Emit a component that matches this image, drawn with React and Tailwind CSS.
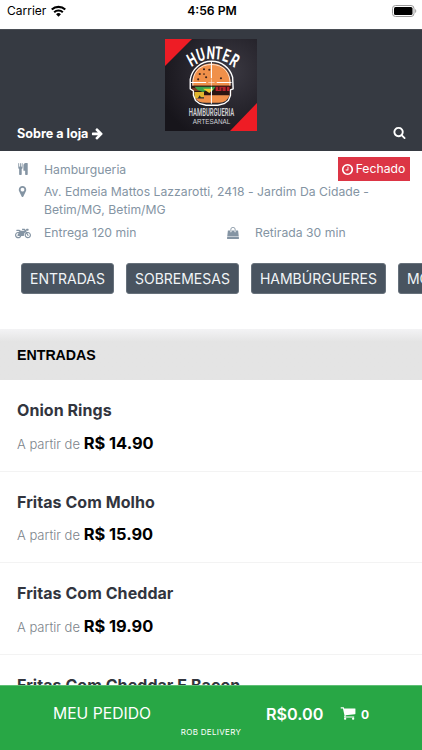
import React from 'react';
import { FaMotorcycle } from 'react-icons/fa';


const CATEGORIES = ['ENTRADAS', 'SOBREMESAS', 'HAMBÚRGUERES', 'MONTE'];

const PRODUCTS = [
  { id: 1, name: 'Onion Rings', price: '14.90' },
  { id: 2, name: 'Fritas Com Molho', price: '15.90' },
  { id: 3, name: 'Fritas Com Cheddar', price: '19.90' },
  { id: 4, name: 'Fritas Com Cheddar E Bacon' },
];

const ICONS = {
  cutlery: 'M832 64v640q0 61-35.5 111t-92.5 70v779q0 52-38 90t-90 38h-128q-52 0-90-38t-38-90v-779q-57-20-92.5-70t-35.5-111v-640q0-26 19-45t45-19 45 19 19 45v416q0 26 19 45t45 19 45-19 19-45v-416q0-26 19-45t45-19 45 19 19 45v416q0 26 19 45t45 19 45-19 19-45v-416q0-26 19-45t45-19 45 19 19 45zm768 0v1600q0 52-38 90t-90 38h-128q-52 0-90-38t-38-90v-512h-224q-13 0-22.5-9.5t-9.5-22.5v-800q0-132 94-226t226-94h256q26 0 45 19t19 45z',
  marker: 'M1152 640q0-106-75-181t-181-75-181 75-75 181 75 181 181 75 181-75 75-181zm256 0q0 109-33 179l-364 774q-16 33-47.5 52t-67.5 19-67.5-19-46.5-52l-365-774q-33-70-33-179 0-212 150-362t362-150 362 150 150 362z',
  bag: 'M1757 1408l35 313q3 28-16 50-19 21-48 21h-1664q-29 0-48-21-19-22-16-50l35-313h1722zm-93-839l86 775h-1708l86-775q3-24 21-40.5t43-16.5h256v128q0 53 37.5 90.5t90.5 37.5 90.5-37.5 37.5-90.5v-128h384v128q0 53 37.5 90.5t90.5 37.5 90.5-37.5 37.5-90.5v-128h256q25 0 43 16.5t21 40.5zm-384-185v256q0 26-19 45t-45 19-45-19-19-45v-256q0-106-75-181t-181-75-181 75-75 181v256q0 26-19 45t-45 19-45-19-19-45v-256q0-159 112.5-271.5t271.5-112.5 271.5 112.5 112.5 271.5z',
  search: 'M1216 832q0-185-131.5-316.5t-316.5-131.5-316.5 131.5-131.5 316.5 131.5 316.5 316.5 131.5 316.5-131.5 131.5-316.5zm512 832q0 52-38 90t-90 38q-54 0-90-38l-343-342q-179 124-399 124-143 0-273.5-55.5t-225-150-150-225-55.5-273.5 55.5-273.5 150-225 225-150 273.5-55.5 273.5 55.5 225 150 150 225 55.5 273.5q0 220-124 399l343 343q37 37 37 90z',
  clock: 'M1024 544v448q0 14-9 23t-23 9h-320q-14 0-23-9t-9-23v-64q0-14 9-23t23-9h224v-352q0-14 9-23t23-9h64q14 0 23 9t9 23zm416 352q0-148-73-273t-198-198-273-73-273 73-198 198-73 273 73 273 198 198 273 73 273-73 198-198 73-273zm224 0q0 209-103 385.5t-279.5 279.5-385.5 103-385.5-103-279.5-279.5-103-385.5 103-385.5 279.5-279.5 385.5-103 385.5 103 279.5 279.5 103 385.5z',
  cart: 'M704 1536q0 52-38 90t-90 38-90-38-38-90 38-90 90-38 90 38 38 90zm896 0q0 52-38 90t-90 38-90-38-38-90 38-90 90-38 90 38 38 90zm128-1088v512q0 24-16.5 42.5t-40.5 21.5l-1044 122q13 60 13 70 0 16-24 64h920q26 0 45 19t19 45-19 45-45 19h-1024q-26 0-45-19t-19-45q0-11 8-31.5t16-36 21.5-40 15.5-29.5l-177-823h-204q-26 0-45-19t-19-45 19-45 45-19h256q16 0 28.5 6.5t19.5 15.5 13 24.5 8 26 5.5 29.5 4.5 26h1201q26 0 45 19t19 45z',
  arrow: 'M1600 960q0 54-37 91l-651 651q-39 37-91 37-51 0-90-37l-75-75q-38-38-38-91t38-91l293-293h-704q-52 0-84.5-37.5t-32.5-90.5v-128q0-53 32.5-90.5t84.5-37.5h704l-293-294q-38-36-38-90t38-90l75-75q38-38 90-38 53 0 91 38l651 651q37 35 37 90z',
};


const Icon = ({ name, className }) => (
  <svg viewBox="0 0 1792 1792" fill="currentColor" className={className}>
    <path d={ICONS[name]} />
  </svg>
);


const StatusBar = () =>
{
  return (
    <div className="grid grid-cols-3 items-center h-[29px] shrink-0 pl-[7px] pr-[5px] pb-[7px] text-black">
      <div className="flex items-center gap-[5px]">
        <span className="text-[12px] leading-4">Carrier</span>
        <svg viewBox="0 0 16 12" className="w-[15px] h-[12px]" fill="none" stroke="currentColor">
          <path d="M.8 4.5a10.4 10.4 0 0 1 14.4 0" strokeWidth="2.3" />
          <path d="M3.4 7.3a6.6 6.6 0 0 1 9.2 0" strokeWidth="2.2" />
          <path d="M8 12 5.4 9.4a3.7 3.7 0 0 1 5.2 0z" fill="currentColor" stroke="none" />
        </svg>
      </div>
      <span className="text-center text-[12.2px] leading-4 font-semibold">4:56 PM</span>
      <svg viewBox="0 0 25 12" className="w-[25px] h-[12px] justify-self-end">
        <rect x="0.5" y="0.5" width="21.5" height="11" rx="3" fill="none" stroke="#9a9a9a" />
        <rect x="2" y="2" width="18.5" height="8" rx="1.5" fill="#000" />
        <path d="M23.2 4v4c1.4-.6 1.4-3.4 0-4z" fill="#9a9a9a" />
      </svg>
    </div>
  );
};


const StoreLogo = () =>
{
  return (
    <svg viewBox="0 0 92 92" className="w-[92px] h-[92px]">
      <defs>
        <radialGradient id="board" cx="0.7" cy="0.35" r="0.8">
          <stop offset="0" stopColor="#3b3942" />
          <stop offset="0.5" stopColor="#28262e" />
          <stop offset="1" stopColor="#17151b" />
        </radialGradient>
      </defs>
      <rect width="92" height="92" fill="url(#board)" />
      <path d="M0 0h27L0 27z" fill="#ee1c25" />
      <path d="M92 64v28H65z" fill="#ee1c25" />

      <g fill="#fff" fontFamily="Roboto, 'Liberation Sans', sans-serif" fontWeight="700" fontSize="18" textAnchor="middle">
        <text transform="translate(30 26) rotate(-28) scale(0.66 1)">H</text>
        <text transform="translate(37.5 21.5) rotate(-17) scale(0.66 1)">U</text>
        <text transform="translate(45.5 20) rotate(4) scale(0.66 1)">N</text>
        <text transform="translate(53 20.3) rotate(6) scale(0.66 1)">T</text>
        <text transform="translate(59.5 22.5) rotate(20) scale(0.66 1)">E</text>
        <text transform="translate(66.5 27) rotate(30) scale(0.66 1)">R</text>
      </g>

      {/* burger */}
      <g transform="translate(-3.4 -4.2) scale(1.06)">
        <path d="M29 48c-1-13 7-21 18-21s19 8 18 21z" fill="#f0904a" />
        <g fill="#3a2018">
          <circle cx="36" cy="37" r="1" />
          <circle cx="40" cy="32.5" r="1" />
          <circle cx="45" cy="33" r="1" />
          <circle cx="34.5" cy="42" r="1" />
          <circle cx="42" cy="40" r="1" />
          <circle cx="56" cy="41" r="1" />
          <circle cx="40" cy="37" r="0.8" />
        </g>
        <path d="M28 48h38v9H28z" fill="#2b1512" />
        <path d="M29 50h12v3H29z" fill="#7b3c22" />
        <path d="M31 49h20l-3 4-5-1-4 2-5-2z" fill="#3aa34a" />
        <path d="M39 51h10l-4 4z" fill="#f4cb33" />
        <path d="M51 49h13v4H51z" fill="#b8242c" />
        <path d="M54 49v3m3-2v3m4-4v4" stroke="#2a1012" strokeWidth="1" />
        <path d="M31 54h9v5h-3l-1-2-2 3h-3z" fill="#e2b62e" />
        <path d="M40 57h24q-2 7-10 7H42q-8 0-10-4h8z" fill="#f0904a" />

        {/* crosshair */}
        <g fill="none" stroke="#fff">
          <path d="M47 25a20.5 20.5 0 0 1 20 15l.5 11-2.5 1v5l-2 5-4 3-6 1.500H42l-6-1.500-4-3-2-5v-4l-3-2v-9a20.5 20.5 0 0 1 20-17z" strokeWidth="1.3" strokeLinejoin="round" />
          <path d="M29.5 48c-1-12 6-20 17.5-20s18.5 8 17.5 20" strokeWidth="0.7" />
          <path d="M47 25v16M47 49v16M27 45h15M52 45h14" strokeWidth="1" />
          <path d="M44 45h6M47 42v6" strokeWidth="0.5" />
        </g>
      </g>

      <g fill="#d0d0d4" textAnchor="middle" fontFamily="Roboto, 'Liberation Sans', sans-serif">
        <text transform="translate(46.5 77.3) scale(0.59 1)" fontSize="10" fontWeight="600">HAMBURGUERIA</text>
        <text x="46.5" y="84.5" fontSize="6.3" fontFamily="'Liberation Sans', sans-serif">ARTESANAL</text>
      </g>
    </svg>
  );
};


const StoreHeader = () =>
{
  return (
    <header className="grid grid-cols-3 h-[122px] shrink-0 bg-[#363a42] border-t border-[#4a4e55] pl-[17px] pr-[16px] text-white">
      <button className="flex items-center gap-[3px] self-end mb-[9px] whitespace-nowrap text-[12.6px] leading-4 font-bold">
        Sobre a loja
        <Icon name="arrow" className="w-[13px] h-[13px] -mt-px" />
      </button>
      <div className="justify-self-center pt-[9px]">
        <StoreLogo />
      </div>
      <button className="self-end justify-self-end mb-[12px]">
        <Icon name="search" className="w-[13px] h-[13px]" />
      </button>
    </header>
  );
};


const StoreInfo = () =>
{
  return (
    <section className="shrink-0 h-[101px] pt-[7px] pl-[15px] pr-[12px] text-[12.2px] leading-[18px] tracking-[0.02px] text-[#8494a3]">
      <div className="flex items-start">
        <div className="flex justify-center w-[15px] pt-[5px]">
          <Icon name="cutlery" className="w-[12px] h-[12px]" />
        </div>
        <span className="flex-1 pl-[14px] pt-[3px]">Hamburgueria</span>
        <div className="flex items-center justify-center gap-[2px] -mt-px w-[72px] h-[24px] pr-[2px] bg-[#dc3545] text-white">
          <Icon name="clock" className="w-[13px] h-[13px]" />
          Fechado
        </div>
      </div>
      <div className="flex items-start">
        <div className="flex justify-center w-[15px] pt-[4px]">
          <Icon name="marker" className="w-[13px] h-[13px]" />
        </div>
        <p className="pl-[14px] pt-[2px]">
          Av. Edmeia Mattos Lazzarotti, 2418 - Jardim Da Cidade - <br />
          Betim/MG, Betim/MG
        </p>
      </div>
      <div className="flex items-center pt-[5px]">
        <FaMotorcycle className="w-[16px] h-[13px]" />
        <span className="w-[194px] pl-[13px]">Entrega 120 min</span>
        <div className="flex justify-center w-[15px]">
          <Icon name="bag" className="w-[12px] h-[12px]" />
        </div>
        <span className="pl-[15px]">Retirada 30 min</span>
      </div>
    </section>
  );
};


const CategoryNav = () =>
{
  return (
    <nav className="flex gap-[12px] shrink-0 h-[77px] pt-[11px] pl-[21px] overflow-hidden">
      {CATEGORIES.map((category) => (
        <button
          key={category}
          className="shrink-0 h-[31px] px-[8px] rounded-[3px] border border-[#67717b] bg-[#495460] text-[#f1f4f7] text-[14px] leading-[18px] whitespace-nowrap"
        >
          {category}
        </button>
      ))}
    </nav>
  );
};


const ProductRow = ({ product }) =>
{
  return (
    <li className="shrink-0 h-[91.6px] pt-[18px] pl-[17px] border-b border-[#f3f3f3]">
      <h3 className="text-[16px] leading-6 tracking-[0.06px] font-[650] text-[#32353e]">{product.name}</h3>
      {product.price && (
        <p className="pt-[8.5px] text-[13px] leading-6 font-light text-[#7c838a]">
          A partir de <span className="text-[16.4px] font-bold text-black">R$ {product.price}</span>
        </p>
      )}
    </li>
  );
};


const OrderBar = () =>
{
  return (
    <footer className="shrink-0 h-[65px] bg-[#28a745] border-t border-[#5fbf76] text-white">
      <div className="flex items-center h-[40px] pt-[15px] pl-[53px]">
        <span className="w-[213px] text-[15.7px] leading-5">MEU PEDIDO</span>
        <span className="w-[74px] text-[16.2px] leading-5 font-semibold">R$0.00</span>
        <Icon name="cart" className="w-[16px] h-[16px] -mt-px" />
        <span className="pl-[5px] pt-[2px] text-[12px] leading-4 font-bold">0</span>
      </div>
      <p className="pt-[1px] text-center text-[8px] leading-[10px] tracking-[0.3px]">ROB DELIVERY</p>
    </footer>
  );
};


const App = () =>
{
  return (
    <div className="flex flex-col w-[422px] h-[750px] overflow-hidden bg-white font-[Inter,'Liberation_Sans',sans-serif]">
      <StatusBar />
      <StoreHeader />
      <StoreInfo />
      <CategoryNav />
      <h2 className="flex items-center shrink-0 h-[51px] pl-[17px] bg-linear-to-b from-[#f3f3f5] to-[#e4e4e4] to-25% font-['Liberation_Sans',sans-serif] text-[14.2px] leading-5 font-bold text-black">
        ENTRADAS
      </h2>
      <ul className="flex flex-col flex-1 min-h-0 overflow-hidden">
        {PRODUCTS.map((product) => (
          <ProductRow key={product.id} product={product} />
        ))}
      </ul>
      <OrderBar />
    </div>
  );
};


export default App;
